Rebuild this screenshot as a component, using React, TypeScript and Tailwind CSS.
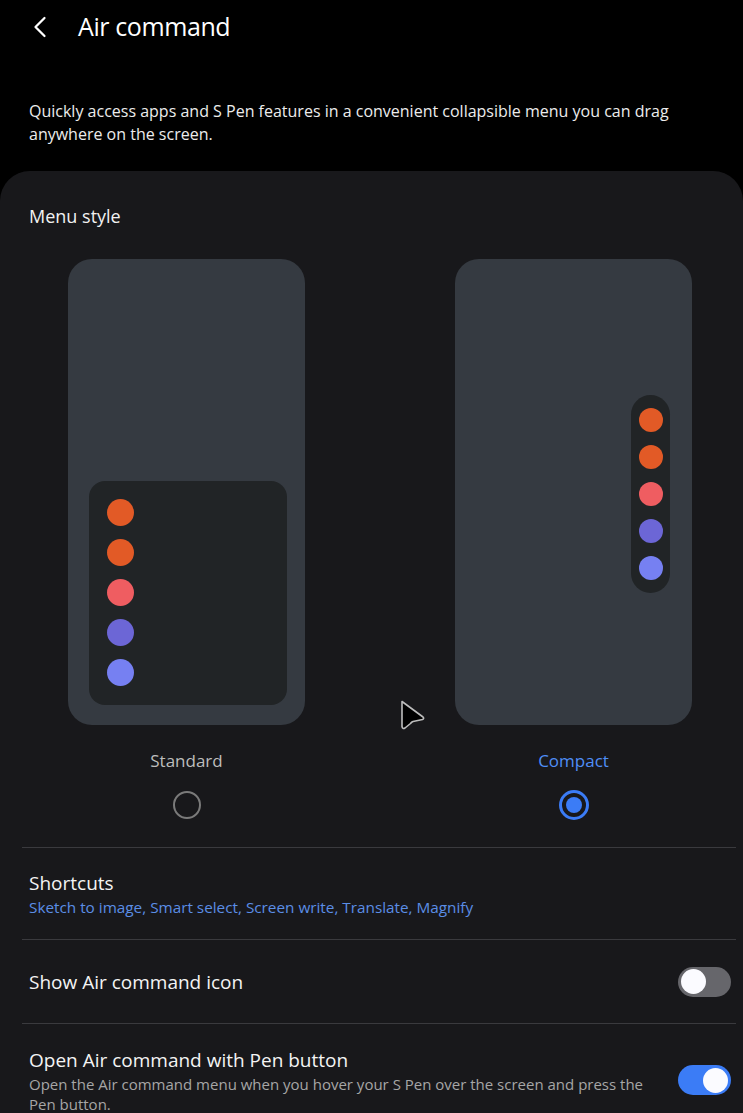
import { ChevronLeft } from "lucide-react";

const STANDARD_DOTS = ["#e25a26", "#e25a26", "#ef5d61", "#6c66d6", "#7680f2"];

function Dot({ color, size }: { color: string; size: string }) {
  return <span className={`block rounded-full ${size}`} style={{ backgroundColor: color }} />;
}

function Toggle({ on }: { on: boolean }) {
  return (
    <div
      className={`flex h-[30px] w-[53px] shrink-0 items-center rounded-full px-[3px] ${
        on ? "justify-end bg-[#3b7cf6]" : "justify-start bg-[#66666b]"
      }`}
    >
      <span className="block h-[25px] w-[25px] rounded-full bg-[#fbfbff]" />
    </div>
  );
}

export default function App() {
  return (
    <div
      className="min-h-[1113px] w-[743px] overflow-hidden bg-black text-white"
      style={{ fontFamily: "'Open Sans', 'Noto Sans', sans-serif" }}
    >
      <header className="flex h-[54px] items-center">
        <ChevronLeft className="ml-[22px] h-[36px] w-[36px] text-white" strokeWidth={1.5} />
        <h1 className="ml-[20px] text-[25px] font-medium tracking-[-0.4px]">Air command</h1>
      </header>

      <p className="px-[29px] pt-[46px] text-[16px] leading-[23px] text-[#ececec]">
        Quickly access apps and S Pen features in a convenient collapsible menu you can drag anywhere on the screen.
      </p>

      <section className="mt-[25px] rounded-t-[30px] bg-[#18181b] pb-[20px]">
        <h2 className="px-[29px] pt-[32px] text-[18px] leading-[26px] text-[#f2f2f2]">Menu style</h2>

        <div className="relative mt-[30px] flex justify-between pl-[68px] pr-[51px]">
          <div className="flex w-[237px] flex-col items-center">
            <div className="flex h-[466px] w-[237px] flex-col justify-end rounded-[24px] bg-[#353a41] pb-[20px] pl-[21px] pr-[18px]">
              <div className="flex h-[224px] flex-col gap-[13px] rounded-[16px] bg-[#212426] pl-[18px] pt-[18px]">
                {STANDARD_DOTS.map((c, i) => (
                  <Dot key={i} color={c} size="h-[27px] w-[27px]" />
                ))}
              </div>
            </div>
            <span className="mt-[24px] text-[17px] leading-[24px] text-[#bdbdbd]">Standard</span>
            <span className="mt-[18px] block h-[28px] w-[28px] rounded-full border-2 border-[#7a7a7a]" />
          </div>

          <svg className="absolute left-[396px] top-[438px]" width="34" height="34" viewBox="0 0 34 34">
            <path
              d="M6 4.5 L27 20 Q28.5 21.5 26.5 22.5 L17 24.5 Q15.5 25 14.5 26.5 L9 31 Q6.5 32.5 6 29.5 Z"
              fill="#000"
              stroke="#bdbdbd"
              strokeWidth="1.6"
              strokeLinejoin="round"
            />
          </svg>

          <div className="flex w-[237px] flex-col items-center">
            <div className="flex h-[466px] w-[237px] items-start justify-end rounded-[24px] bg-[#353a41] pr-[22px] pt-[136px]">
              <div className="flex w-[39px] flex-col items-center gap-[13px] rounded-full bg-[#212426] py-[13px]">
                {STANDARD_DOTS.map((c, i) => (
                  <Dot key={i} color={c} size="h-[24px] w-[24px]" />
                ))}
              </div>
            </div>
            <span className="mt-[24px] text-[17px] font-medium leading-[24px] text-[#4f8ef7]">Compact</span>
            <span className="mt-[17px] flex h-[30px] w-[30px] items-center justify-center rounded-full border-[3px] border-[#3b7cf6]">
              <span className="block h-[16px] w-[16px] rounded-full bg-[#3b7cf6]" />
            </span>
          </div>
        </div>

        <div className="ml-[22px] mr-[7px] mt-[27px] border-t border-[#3a3a3e]" />

        <div className="px-[29px] pb-[22px] pt-[21px]">
          <div className="text-[19px] leading-[28px] text-[#f4f4f4]">Shortcuts</div>
          <div className="text-[15.3px] leading-[20px] text-[#5b8ee6]">
            Sketch to image, Smart select, Screen write, Translate, Magnify
          </div>
        </div>

        <div className="ml-[22px] mr-[7px] border-t border-[#3a3a3e]" />

        <div className="flex h-[83px] items-center justify-between pl-[29px] pr-[12px]">
          <span className="text-[19px] leading-[28px] text-[#f4f4f4]">Show Air command icon</span>
          <Toggle on={false} />
        </div>

        <div className="ml-[22px] mr-[7px] border-t border-[#3a3a3e]" />

        <div className="flex items-center justify-between gap-[12px] pl-[29px] pr-[12px] pt-[22px]">
          <div className="max-w-[618px]">
            <div className="text-[19px] leading-[28px] text-[#f4f4f4]">Open Air command with Pen button</div>
            <div className="text-[15px] leading-[20px] text-[#a6a6a6]">
              Open the Air command menu when you hover your S Pen over the screen and press the Pen button.
            </div>
          </div>
          <Toggle on={true} />
        </div>
      </section>
    </div>
  );
}
